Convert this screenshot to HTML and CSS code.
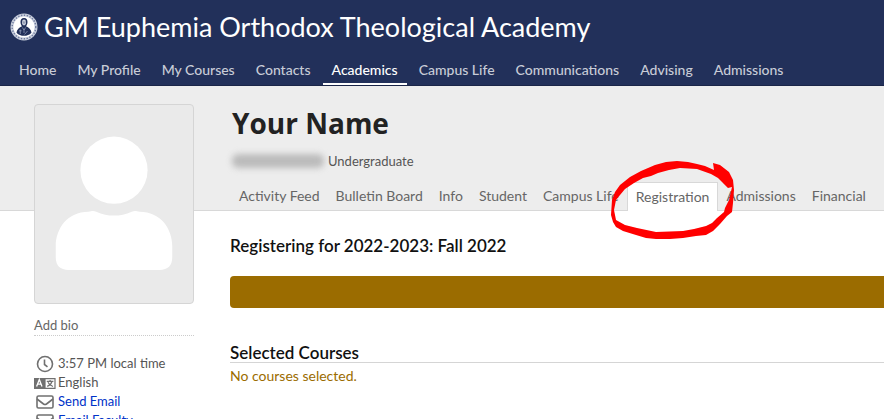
FILE: index.html
```html
<!DOCTYPE html>
<html lang="en">
<head>
    <meta charset="UTF-8">
    <meta name="viewport" content="width=device-width, initial-scale=1.0">
    <title>GM Euphemia Orthodox Theological Academy</title>
    <link rel="stylesheet" href="styles.css">
</head>
<body>
    <header class="site-header">
        <div class="brand">
            <svg class="seal" viewBox="0 0 28 28" aria-hidden="true">
                <circle cx="14" cy="14" r="13.500" fill="#c9cfdd"/>
                <circle cx="14" cy="14" r="11.800" fill="none" stroke="#6f7b9e" stroke-width="1.500" stroke-dasharray="1.3 1.6"/>
                <circle cx="14" cy="14" r="10.600" fill="#fff"/>
                <path d="M14 5c-2.600 0-3.700 2-3.500 4.300.1 1.800.7 3 1.500 4-2.800 1.200-5.200 3-5.500 6.400a10.500 10.500 0 0 0 15 0c-.3-3.400-2.700-5.200-5.500-6.400.8-1 1.400-2.200 1.500-4 .2-2.300-.9-4.300-3.500-4.300z" fill="#22305a"/>
                <ellipse cx="14" cy="9.400" rx="2" ry="2.800" fill="#c9cfdd"/>
                <path d="M12.700 9h1M14.500 9h1M14 9.500v1.200" stroke="#22305a" stroke-width=".6" fill="none"/>
                <path d="M10.300 16.500v4.500M9 17.800h2.600M12.500 14.500l1.500 3 1.500-3M17.500 18l-3 3.500M14 18v2" stroke="#8d97b4" stroke-width=".8" fill="none"/>
            </svg>
            <span class="brand-name">GM Euphemia Orthodox Theological Academy</span>
        </div>
        <nav class="main-nav">
            <a href="#">Home</a>
            <a href="#">My Profile</a>
            <a href="#">My Courses</a>
            <a href="#">Contacts</a>
            <a href="#" class="active">Academics</a>
            <a href="#">Campus Life</a>
            <a href="#">Communications</a>
            <a href="#">Advising</a>
            <a href="#">Admissions</a>
        </nav>
    </header>

    <section class="profile-header">
        <h1>Your Name</h1>
        <div class="profile-meta">
            <span class="student-id"></span>
            <span>Undergraduate</span>
        </div>
        <nav class="tabs">
            <a href="#">Activity Feed</a>
            <a href="#">Bulletin Board</a>
            <a href="#">Info</a>
            <a href="#">Student</a>
            <a href="#">Campus Life</a>
            <a href="#" class="current">Registration
                <svg class="marker" viewBox="0 0 130 84" aria-hidden="true">
                    <path fill="#f00" fill-rule="evenodd" d="M105 5L112 7L121 14L125 22L126 32L125 45L124 54L119 58L112 66L105 73L98 77L88 78L75 80L62 81L48 81L38 80L28 77L15 73L8 69L5 64L3 57L4 42L7 34L12 27L22 19L33 13L47 7L58 4L69 3L80 4L89 6L97 8L106 12ZM103 16L89 11L72 10L61 12L50 15L43 18L35 20L26 25L17 31L12 37L8 42L6 52L8 62L17 67L29 70L48 74L75 73L86 71L98 68L104 65L109 60L116 54L117 50L121 42L124 29L120 30L114 24L110 20Z"/>
                </svg>
            </a>
            <a href="#">Admissions</a>
            <a href="#">Financial</a>
        </nav>
    </section>

    <div class="page">
        <aside class="sidebar">
            <div class="avatar">
                <svg viewBox="0 0 160 200" aria-hidden="true">
                    <circle cx="80" cy="66" r="34" fill="#fff"/>
                    <path d="M54 108c4-1 6-1 8 0q18 8 36 0c2-1 4-1 8 0 21 0 33 17 33 35v11q0 13-13 13H34q-13 0-13-13v-11c0-18 12-35 33-35z" fill="#fff"/>
                </svg>
            </div>
            <a href="#" class="add-bio">Add bio</a>
            <ul class="info-list">
                <li>
                    <svg class="icon" viewBox="0 0 22 18" aria-hidden="true">
                        <circle cx="11" cy="9" r="7.500" fill="none" stroke="#707070" stroke-width="1.600"/>
                        <path d="M10.500 4.500v5l3 2.300" fill="none" stroke="#707070" stroke-width="1.600"/>
                    </svg>
                    <span>3:57 PM local time</span>
                </li>
                <li>
                    <svg class="icon" viewBox="0 0 22 18" aria-hidden="true">
                        <path d="M0 4h11v11H0z" fill="#707070"/>
                        <path d="M11 4.600h10v9.800H11z" fill="#fff" stroke="#707070" stroke-width="1.200"/>
                        <path d="M2.600 12.500l2.700-7 2.700 7M3.700 10.200h3.200" fill="none" stroke="#fff" stroke-width="1.300"/>
                        <path d="M12.800 7.400h6.600M16.100 6v1.400M18 7.400c-.6 2.500-2.400 4-4.800 5M14 8.300c.9 2.100 2.500 3.400 5 4.200" fill="none" stroke="#707070" stroke-width="1.200"/>
                    </svg>
                    <span>English</span>
                </li>
                <li>
                    <svg class="icon" viewBox="0 0 22 18" aria-hidden="true">
                        <rect x="3" y="3" width="16" height="12" rx="1.500" fill="none" stroke="#707070" stroke-width="1.600"/>
                        <path d="M3 6l6.500 5q1.500 1 3 0L19 6" fill="none" stroke="#707070" stroke-width="1.600"/>
                    </svg>
                    <a href="#">Send Email</a>
                </li>
                <li>
                    <svg class="icon" viewBox="0 0 22 18" aria-hidden="true">
                        <rect x="3" y="3" width="16" height="12" rx="1.500" fill="none" stroke="#707070" stroke-width="1.600"/>
                        <path d="M3 6l6.500 5q1.500 1 3 0L19 6" fill="none" stroke="#707070" stroke-width="1.600"/>
                    </svg>
                    <a href="#">Email Faculty</a>
                </li>
            </ul>
        </aside>

        <main class="content">
            <h2>Registering for 2022-2023: Fall 2022</h2>
            <div class="banner"></div>
            <h3>Selected Courses</h3>
            <p class="notice">No courses selected.</p>
        </main>
    </div>
</body>
</html>
```

FILE: styles.css
```css
* {
    margin: 0;
    padding: 0;
    box-sizing: border-box;
}

body {
    height: 100vh;
    overflow: hidden;
    font-family: Lato, "Liberation Sans", sans-serif;
    font-size: 14px;
    line-height: 20px;
    color: #555;
    background: #fff;
    white-space: nowrap;
}

a {
    color: inherit;
    text-decoration: none;
}

/* Top bar */
.site-header {
    background: #22305a;
    padding: 9px 10px 0;
    border-bottom: 1px solid #1a2548;
}

.brand {
    display: flex;
    align-items: center;
    gap: 6px;
    height: 36px;
}

.seal {
    width: 28px;
    height: 28px;
}

.brand-name {
    font-size: 27px;
    line-height: 36px;
    color: #fff;
}

.main-nav {
    display: flex;
    gap: 3px;
    margin-top: 10px;
}

.main-nav a {
    height: 30px;
    padding: 5px 9px 0;
    border-bottom: 2px solid transparent;
    font-weight: 500;
    color: #c8ccd7;
}

.main-nav a.active {
    color: #fff;
    border-bottom-color: #fff;
}

/* Name and tabs */
.profile-header {
    background: #ededed;
    border-bottom: 1px solid #d8d8d8;
    padding: 17px 0 0 230px;
}

.profile-header h1 {
    padding-left: 2px;
    font-family: "Open Sans", "Noto Sans", sans-serif;
    font-size: 28px;
    font-weight: 700;
    line-height: 40px;
    color: #222;
}

.profile-meta {
    display: flex;
    align-items: center;
    gap: 4px;
    margin-top: 8px;
    padding-left: 2px;
    font-size: 13px;
}

.student-id {
    width: 92px;
    height: 14px;
    border-radius: 6px;
    background: #bbb;
    filter: blur(3px);
}

.tabs {
    display: flex;
    height: 29px;
    margin: 11px 0 -1px 1px;
}

.tabs a {
    padding: 4px 8px 0;
    color: #666;
}

.tabs .current {
    position: relative;
    z-index: 1;
    border: 1px solid #d8d8d8;
    border-bottom: 0;
    background: #fff;
}

.marker {
    position: absolute;
    top: -25px;
    left: -20px;
    width: 130px;
    height: 84px;
}

/* Page body */
.page {
    display: flex;
    gap: 36px;
    padding-left: 34px;
}

.sidebar {
    flex: 0 0 160px;
    margin-top: -107px;
    font-size: 13px;
}

.avatar {
    height: 200px;
    border: 1px solid #d5d5d5;
    border-radius: 4px;
    background: #eaeaea;
    overflow: hidden;
}

.avatar svg {
    display: block;
    width: 100%;
}

.add-bio {
    display: block;
    margin-top: 11px;
    border-bottom: 1px dotted #ccc;
    color: #666;
}

.info-list {
    margin-top: 18px;
    line-height: 19px;
    list-style: none;
}

.info-list li {
    display: flex;
    align-items: center;
    gap: 2px;
}

.info-list a {
    color: #0032c8;
}

.icon {
    width: 22px;
    height: 18px;
}

.content {
    flex: 1;
    padding-top: 23px;
}

.content h2,
.content h3 {
    font-size: 17px;
    font-weight: 600;
    line-height: 24px;
    color: #111;
}

.banner {
    height: 32px;
    margin: 18px 0 36px;
    border-radius: 4px 0 0 4px;
    background: #9b6c00;
}

.content h3 {
    line-height: 18px;
    border-bottom: 1px solid #d5d5d5;
}

.notice {
    margin-top: 3px;
    color: #9b6c00;
}
```
